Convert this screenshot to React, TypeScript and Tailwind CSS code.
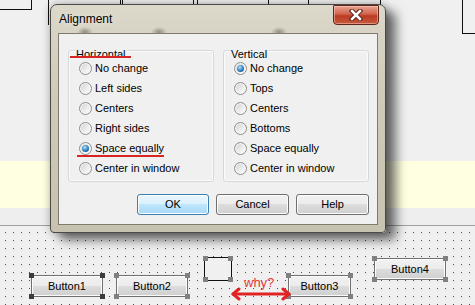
import React from 'react'

const horizontal = ['No change', 'Left sides', 'Centers', 'Right sides', 'Space equally', 'Center in window']
const vertical = ['No change', 'Tops', 'Centers', 'Bottoms', 'Space equally', 'Center in window']

function Radio({ label, checked }: { label: string; checked?: boolean }) {
  return (
    <div className="flex items-center gap-[3px] h-[20px]">
      <span className="w-[13px] h-[13px] rounded-full border border-[#8e8f8f] bg-[linear-gradient(135deg,#cfcfcf,#f4f4f4_70%,#ffffff)] flex items-center justify-center shadow-[inset_0_0_0_1px_#f6f6f6]">
        {checked && (
          <span className="w-[7px] h-[7px] rounded-full bg-[radial-gradient(circle_at_40%_35%,#b7e4fb,#2a7dbd_55%,#0f4574)]" />
        )}
      </span>
      <span className="text-[11px] leading-none text-black">{label}</span>
    </div>
  )
}

function Group({ title, items, selected }: { title: string; items: string[]; selected: number }) {
  return (
    <div className="flex-1 h-[132px] border border-[#d5d9dc] rounded-[3px] shadow-[inset_0_0_0_1px_#fbfbfb] pl-[10px] pb-[3px] flex flex-col">
      <div className="h-[7px] -mt-[6px] -ml-[4px] mb-[6px] leading-none">
        <span className="bg-[#f0f0f0] px-[1px] text-[11px] text-black">{title}</span>
      </div>
      {items.map((t, i) => (
        <Radio key={t} label={t} checked={i === selected} />
      ))}
    </div>
  )
}

function WinButton({ label, primary, className = '' }: { label: string; primary?: boolean; className?: string }) {
  return (
    <div
      className={
        'h-[21px] rounded-[3px] border flex items-center justify-center text-[11px] text-black shadow-[inset_0_0_0_1px_#fcfcfc] ' +
        (primary
          ? 'border-[#3c7fb1] bg-[linear-gradient(#eaf6fd,#d9f0fc_50%,#bee6fd_50%,#a7d9f5)] '
          : 'border-[#707070] bg-[linear-gradient(#f2f2f2,#ebebeb_50%,#dddddd_50%,#cfcfcf)] ') +
        className
      }
    >
      {label}
    </div>
  )
}

function Handles({ dark }: { dark?: boolean }) {
  const c = dark ? 'bg-[#3c3c3c]' : 'bg-[#808080]'
  return (
    <>
      <span className={'absolute -left-[2px] -top-[2px] w-[5px] h-[5px] ' + c} />
      <span className={'absolute -right-[2px] -top-[2px] w-[5px] h-[5px] ' + c} />
      <span className={'absolute -left-[2px] -bottom-[2px] w-[5px] h-[5px] ' + c} />
      <span className={'absolute -right-[2px] -bottom-[2px] w-[5px] h-[5px] ' + c} />
    </>
  )
}

function DesignButton({ label, x, y, w, dark }: { label: string; x: number; y: number; w: number; dark?: boolean }) {
  return (
    <div className="absolute" style={{ left: x, top: y, width: w }}>
      <WinButton label={label} className="h-[22px]" />
      <Handles dark={dark} />
    </div>
  )
}

export default function App() {
  return (
    <div className="relative w-[475px] h-[305px] overflow-hidden flex flex-col bg-[#f0f0f0] font-['Liberation_Sans',Arial,sans-serif]">
      {/* designer: top strip */}
      <div className="relative h-[161px] bg-[#f0f0f0]">
        <svg className="absolute inset-0" width="475" height="161">
          <g stroke="#111" strokeWidth="1" fill="none" shapeRendering="crispEdges">
            <path d="M0 9.5H31.5V0" />
            <path d="M48.5 0V25" />
            <path d="M120.5 0V8M122.5 0V8M193.5 0V8M197.5 0V8M268.5 0V8M308.5 0V8M380.5 0V8" />
            <path d="M462.5 0V33.5H475" />
          </g>
        </svg>
      </div>
      <div className="h-[47px] bg-[#ffffe1]" />
      <div className="h-[18px] bg-[#eeeeee] border-b border-[#a0a0a0]" />

      {/* designer canvas */}
      <div className="relative flex-1">
        <svg className="absolute inset-0" width="475" height="79">
          <defs>
            <pattern id="dots" x="5" y="6" width="8" height="8" patternUnits="userSpaceOnUse">
              <rect width="1" height="1" fill="#4a4a4a" />
            </pattern>
          </defs>
          <rect width="475" height="79" fill="url(#dots)" />
        </svg>

        <DesignButton label="Button1" x={31} y={49} w={72} dark />
        <DesignButton label="Button2" x={116} y={49} w={72} />
        <div className="absolute left-[204px] top-[31px] w-[28px] h-[24px] border border-[#111] bg-[#f0f0f0]">
          <Handles />
        </div>
        <DesignButton label="Button3" x={288} y={49} w={63} />
        <DesignButton label="Button4" x={374} y={32} w={72} />

        <span className="absolute left-[244px] top-[50px] text-[13px] leading-none text-[#e23b3b]">why?</span>
        <svg className="absolute left-[229px] top-[61px]" width="64" height="14" viewBox="0 0 64 14">
          <g stroke="#e02424" strokeWidth="3" fill="none" strokeLinecap="round" strokeLinejoin="round">
            <path d="M4 7H60" />
            <path d="M10 2L4 7L10 12" />
            <path d="M54 2L60 7L54 12" />
          </g>
        </svg>
      </div>

      {/* dialog window */}
      <div className="absolute left-[50px] top-[4px] w-[336px] h-[229px] flex flex-col rounded-t-[7px] rounded-b-[4px] border border-[#4b4a44] bg-[radial-gradient(ellipse_8px_5px_at_34px_27px,rgba(60,55,45,0.45),transparent),radial-gradient(ellipse_8px_5px_at_108px_27px,rgba(60,55,45,0.45),transparent),radial-gradient(ellipse_8px_5px_at_228px_27px,rgba(60,55,45,0.45),transparent),linear-gradient(180deg,#dcd8ca,#cfcab9_40%,#c8c3b0)] shadow-[0_0_8px_rgba(0,0,0,0.3),10px_7px_11px_rgba(0,0,0,0.55)]">
        <div className="h-[28px] flex items-start pl-[8px] pr-[6px]">
          <span className="mt-[8px] text-[12px] leading-none text-black [text-shadow:0_0_6px_#f4f1e6]">Alignment</span>
          <div className="ml-auto w-[46px] h-[20px] rounded-b-[4px] rounded-t-[1px] border border-[#5e2518] bg-[linear-gradient(180deg,#e9a493,#d0644b_45%,#bb3b22_55%,#c85a3c)] shadow-[inset_0_0_0_1px_rgba(255,220,210,0.45)] flex items-center justify-center">
            <svg width="14" height="12" viewBox="0 0 14 12">
              <path d="M3 2L11 10M11 2L3 10" stroke="#5a2016" strokeWidth="4.5" strokeLinecap="square" />
              <path d="M3 2L11 10M11 2L3 10" stroke="#ffffff" strokeWidth="2.5" strokeLinecap="square" />
            </svg>
          </div>
        </div>

        <div className="flex-1 mx-[7px] mb-[7px] border border-[#7f7c6f] bg-[#f0f0f0] pt-[16px] pl-[9px] pr-[8px] flex flex-col">
          <div className="flex gap-[9px]">
            <Group title="Horizontal" items={horizontal} selected={4} />
            <Group title="Vertical" items={vertical} selected={0} />
          </div>
          <div className="mt-[12px] flex justify-end gap-[7px]">
            <WinButton label="OK" primary className="w-[72px]" />
            <WinButton label="Cancel" className="w-[73px]" />
            <WinButton label="Help" className="w-[73px]" />
          </div>
        </div>
      </div>

      {/* red annotation marks */}
      <div className="absolute left-[70px] top-[56px] w-[61px] h-[2px] bg-[#d92424]" />
      <div className="absolute left-[77px] top-[155px] w-[87px] h-[2px] bg-[#d92424]" />
    </div>
  )
}
